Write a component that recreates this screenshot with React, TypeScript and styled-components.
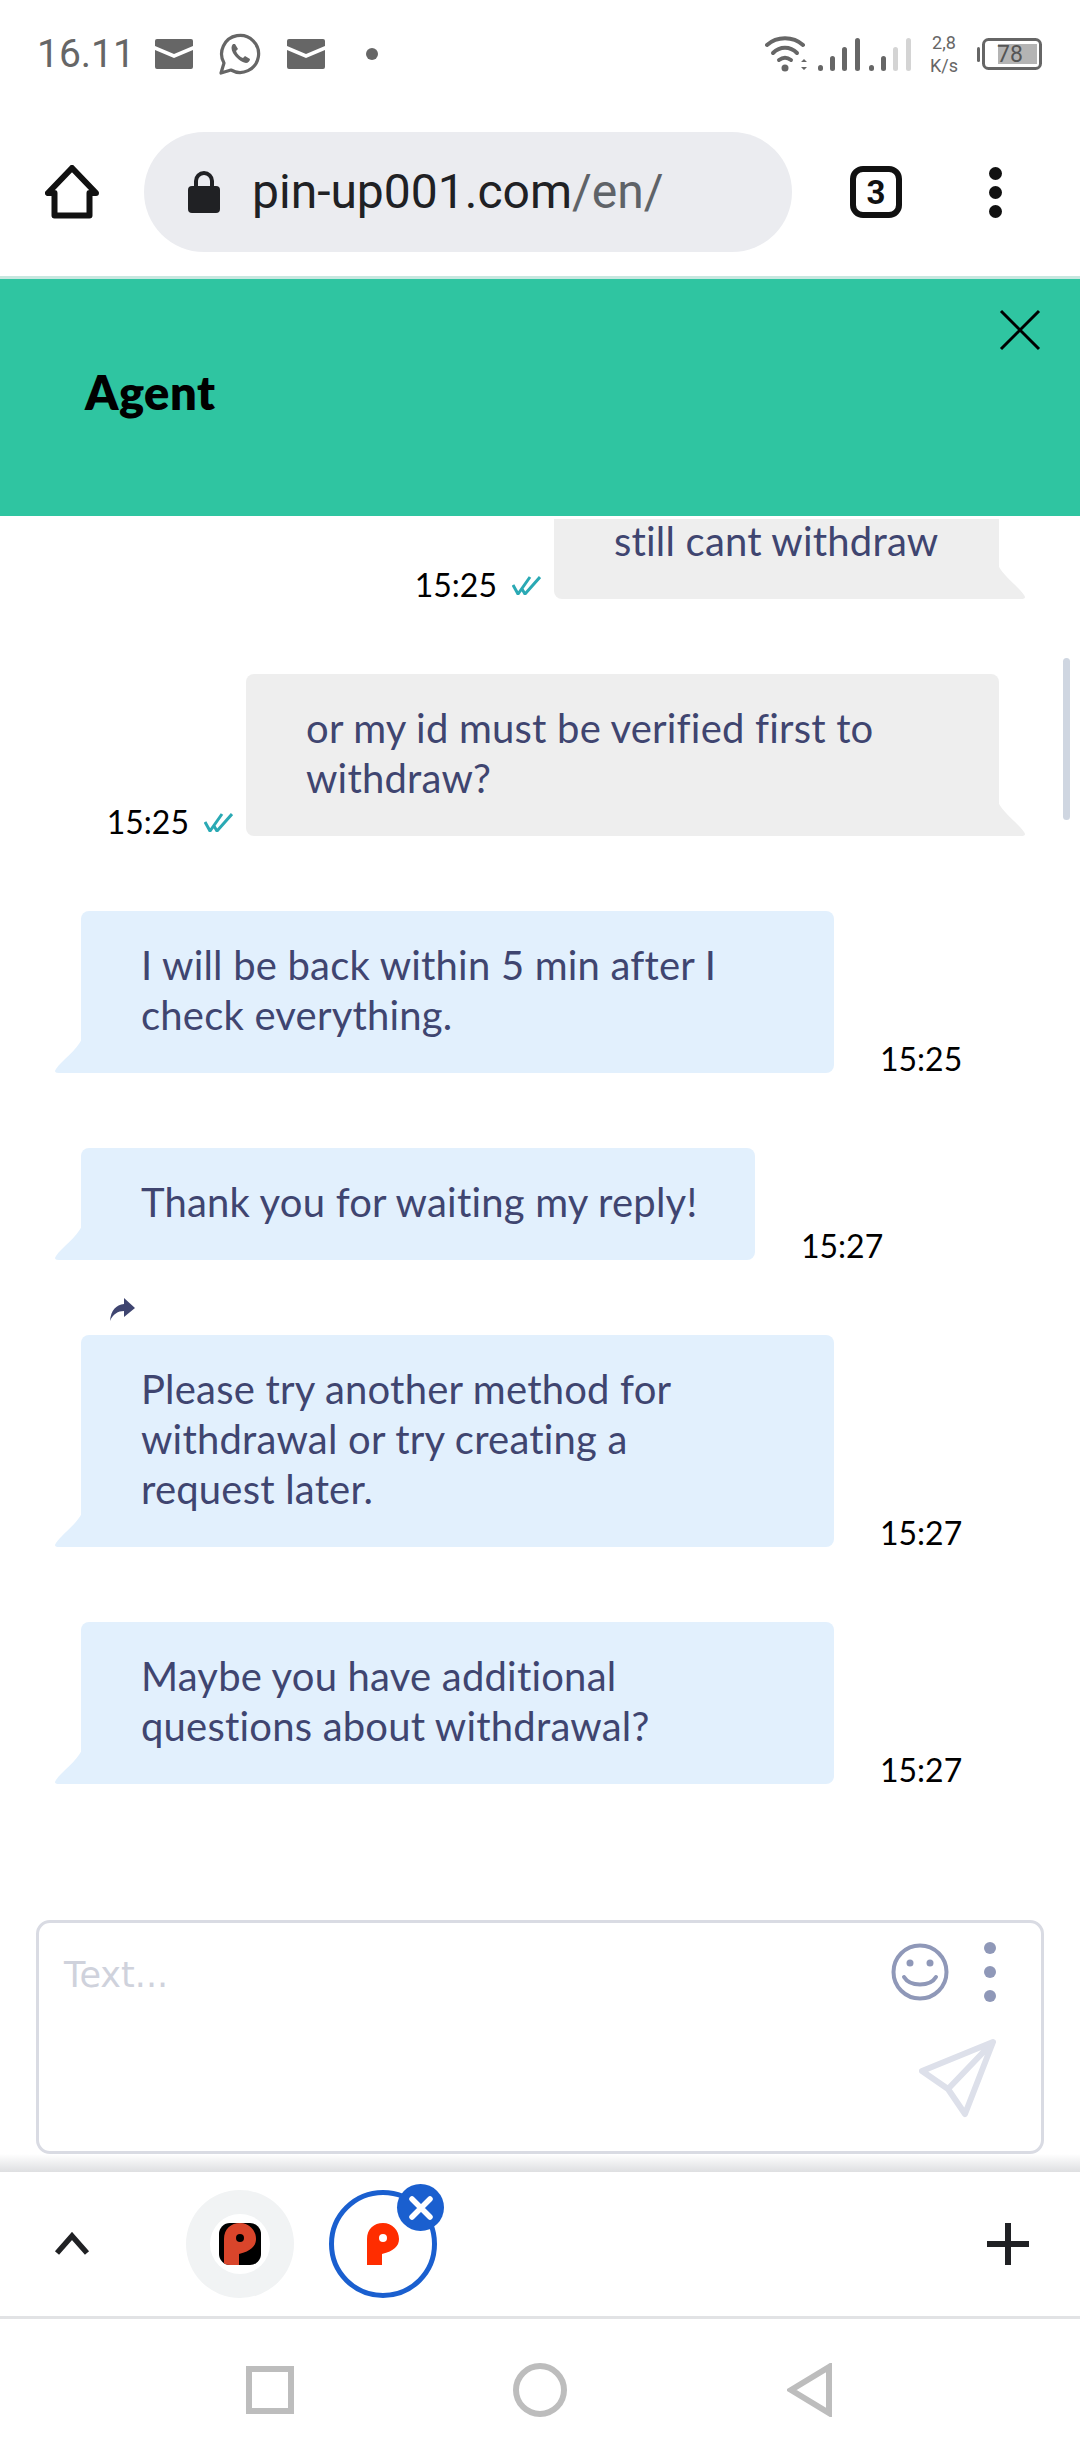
import React from 'react';
import styled, {createGlobalStyle} from 'styled-components';

const GlobalStyle = createGlobalStyle`
  html, body {
    margin: 0;
    padding: 0;
    background: #fff;
  }
  * {
    box-sizing: border-box;
  }
`;

const chatFont = `Lato, "Open Sans", sans-serif`;

const Page = styled.div`
  width: 1080px;
  height: 2460px;
  display: flex;
  flex-direction: column;
  overflow: hidden;
  background: #fff;
`;

const StatusBar = styled.div`
  height: 108px;
  flex: none;
  display: flex;
  align-items: center;
  justify-content: space-between;
  padding: 0 38px 0 37px;
  color: #666;
`;

const StatusGroup = styled.div<{$gap?: number}>`
  display: flex;
  align-items: center;
  gap: ${p => p.$gap ?? 0}px;
`;

const Clock = styled.span`
  font: 400 39px/44px Roboto, sans-serif;
  width: 92px;
`;

const Speed = styled.div`
  width: 46px;
  margin: 0 10px 0 9px;
  text-align: center;
  font: 400 18px/23px Roboto, sans-serif;
  color: #666;
`;

const NoticeDot = styled.svg`
  width: 12px;
  height: 12px;
  margin-left: 15px;
`;

const WifiIcon = styled.svg`
  width: 43px;
  height: 36px;
  margin-right: 10px;
`;

const Toolbar = styled.div`
  height: 168px;
  flex: none;
  display: flex;
  align-items: center;
  padding: 0 45px;
`;

const UrlPill = styled.div`
  width: 648px;
  height: 120px;
  margin-left: 45px;
  border-radius: 60px;
  background: #ebecf0;
  display: flex;
  align-items: center;
  padding-left: 44px;
  gap: 32px;
`;

const UrlText = styled.span`
  font: 400 48px/56px Roboto, sans-serif;
  color: #202124;
`;

const UrlPath = styled.span`
  color: #5f6368;
`;

const TabCount = styled.div`
  width: 52px;
  height: 52px;
  margin-left: 58px;
  border: 6px solid #111;
  border-radius: 13px;
  display: flex;
  align-items: center;
  justify-content: center;
  font: 700 33px/1 Roboto, sans-serif;
  color: #111;
`;

const MenuDots = styled.div`
  margin-left: 87px;
  display: flex;
  flex-direction: column;
  gap: 6px;
`;

const MenuDot = styled.span`
  width: 13px;
  height: 13px;
  border-radius: 50%;
  background: #111;
`;

const ToolbarLine = styled.div`
  height: 3px;
  flex: none;
  background: #c6e7df;
`;

const ChatHeader = styled.div`
  position: relative;
  height: 237px;
  flex: none;
  background: #2fc5a1;
  display: flex;
  align-items: center;
  padding: 0 0 12px 85px;
`;

const AgentName = styled.h1`
  margin: 0;
  font: 800 47px/50px ${chatFont};
  letter-spacing: 0.5px;
  color: #000;
`;

const CloseButton = styled.button`
  position: absolute;
  top: 30px;
  right: 39px;
  width: 42px;
  height: 42px;
  padding: 0;
  border: 0;
  background: none;
  display: flex;
`;

const Messages = styled.div`
  position: relative;
  flex: 1;
  min-height: 0;
  margin-top: 3px;
  overflow: hidden;
  display: flex;
  flex-direction: column;
  justify-content: flex-end;
  gap: 75px;
  padding-bottom: 136px;
`;

const ScrollThumb = styled.div`
  position: absolute;
  top: 139px;
  right: 10px;
  width: 7px;
  height: 162px;
  border-radius: 4px;
  background: #cfd6e1;
`;

const Row = styled.div<{$out?: boolean}>`
  position: relative;
  flex: none;
  display: flex;
  align-items: flex-end;
  justify-content: ${p => (p.$out ? 'flex-end' : 'flex-start')};
  padding: ${p => (p.$out ? '0 81px 0 0' : '0 0 0 81px')};
`;

const Bubble = styled.div<{$out?: boolean; $width: number}>`
  position: relative;
  flex: none;
  width: ${p => p.$width}px;
  padding: 29px 10px 33px 60px;
  border-radius: ${p => (p.$out ? '8px 8px 0 8px' : '8px 8px 8px 0')};
  background: ${p => (p.$out ? '#eeeeee' : '#e2f0fd')};
  color: #3f4570;
  font: 400 40px/50px ${chatFont};
  letter-spacing: 0.2px;

  &::after {
    content: '';
    position: absolute;
    bottom: 0;
    width: 28px;
    height: 34px;
    background: inherit;
    clip-path: path('M0 0 C6 12 20 21 26 30 Q29 34 23 34 L0 34 Z');
    ${p => (p.$out ? 'left: calc(100% - 1px);' : 'right: calc(100% - 1px); transform: scaleX(-1);')}
  }
`;

const Time = styled.span<{$out?: boolean}>`
  flex: none;
  font: 400 32px/28px ${chatFont};
  color: #000;
  margin-left: ${p => (p.$out ? '0' : '46px')};
`;

const ReplyMark = styled.svg`
  position: absolute;
  top: -38px;
  left: 110px;
  width: 25px;
  height: 24px;
`;

const CheckMark = styled.svg`
  flex: none;
  width: 29px;
  height: 19px;
  margin: 0 13px 4px 15px;
`;

const Composer = styled.div`
  position: relative;
  flex: none;
  height: 234px;
  margin: 0 36px;
  padding: 32px 0 0 25px;
  border: 3px solid #d9dbe3;
  border-radius: 14px;
`;

const Placeholder = styled.span`
  font: 400 35px/40px 'DejaVu Sans', sans-serif;
  color: #cfd2dc;
`;

const ComposerTools = styled.div`
  position: absolute;
  top: 19px;
  right: 14px;
  display: flex;
  flex-direction: column;
  align-items: flex-end;
`;

const ToolRow = styled.div`
  display: flex;
  align-items: center;
  gap: 35px;
  padding-right: 31px;
`;

const SendIcon = styled.svg`
  width: 78px;
  height: 80px;
  margin: 36px 30px 0 0;
`;

const TabShade = styled.div`
  height: 18px;
  flex: none;
  background: linear-gradient(#fff, #dedfe1);
`;

const TabStrip = styled.div`
  height: 147px;
  flex: none;
  border-bottom: 3px solid #e2e3e5;
  display: flex;
  align-items: center;
  padding: 0 51px 0 54px;
`;

const ExpandIcon = styled.svg`
  width: 36px;
  height: 24px;
  margin-right: 96px;
`;

const TabBubble = styled.div<{$active?: boolean}>`
  position: relative;
  width: 108px;
  height: 108px;
  margin-right: 35px;
  border-radius: 50%;
  display: flex;
  align-items: center;
  justify-content: center;
  background: ${p => (p.$active ? '#fff' : '#f1f3f4')};
  border: ${p => (p.$active ? '5px solid #1a5fcf' : '0')};
`;

const FaviconWell = styled.div`
  width: 60px;
  height: 60px;
  border-radius: 50%;
  background: #fff;
  display: flex;
  align-items: center;
  justify-content: center;
`;

const BlackTile = styled.div`
  width: 42px;
  height: 42px;
  padding: 0 4px;
  border-radius: 11px;
  background: #000;
  display: flex;
  align-items: center;
  justify-content: center;
  overflow: hidden;
`;

const TabClose = styled.div`
  position: absolute;
  top: -11px;
  right: -12px;
  width: 47px;
  height: 47px;
  border-radius: 50%;
  background: #1a5fcf;
  display: flex;
  align-items: center;
  justify-content: center;
`;

const AddTab = styled.svg`
  width: 42px;
  height: 42px;
  margin-left: auto;
`;

const NavBar = styled.div`
  height: 141px;
  flex: none;
  display: grid;
  grid-template-columns: repeat(3, 270px);
  padding: 0 135px;
  align-items: center;
  justify-items: center;
`;

const PinLogo = ({color, hole, height}: {color: string; hole: string; height: number}) => (
  <svg width={(height * 32) / 42} height={height} viewBox="0 0 32 42">
    <path d="M0 42V16C0 6 7 0 16 0C25 0 32 7 32 16C32 23 27 28 15 31V42Z" fill={color} />
    <circle cx="16" cy="15" r="4" fill={hole} />
  </svg>
);

const Mail = () => (
  <svg width="38" height="30" viewBox="0 0 38 30">
    <path d="M2 0H36A2 2 0 0 1 38 2V7L19 15L0 7V2A2 2 0 0 1 2 0Z" fill="#666" />
    <path d="M0 11L19 19L38 11V28A2 2 0 0 1 36 30H2A2 2 0 0 1 0 28Z" fill="#666" />
  </svg>
);

const Whatsapp = () => (
  <svg width="42" height="42" viewBox="0 0 42 42" fill="none">
    <path d="M2 40L5 30A18.500 18.500 0 1 1 12 37Z" stroke="#666" strokeWidth="3.2" strokeLinejoin="round" />
    <path
      d="M14 11C12 13 12 16 14 20C17 25 22 29 27 30C29 30 31 28 31 26L26 23L24 25C21 24 18 21 17 18L19 16L16 11Z"
      fill="#666"
    />
  </svg>
);

const WifiSignal = () => (
  <WifiIcon viewBox="0 0 43 36" fill="none">
    <g stroke="#666" strokeWidth="4" strokeLinecap="round">
      <path d="M2 9C12 0 28 0 38 9" />
      <path d="M8 17C15 10 25 10 32 17" />
      <path d="M14 24C18 21 22 21 26 24" />
    </g>
    <circle cx="20" cy="32" r="3.500" fill="#666" />
    <path d="M36 26L39 23L42 26ZM36 31L39 34L42 31Z" fill="#666" />
  </WifiIcon>
);

const bars = [
  {x: 0, h: 6, c: '#666'},
  {x: 12, h: 15, c: '#666'},
  {x: 24, h: 24, c: '#666'},
  {x: 37, h: 33, c: '#666'},
  {x: 51, h: 6, c: '#666'},
  {x: 63, h: 15, c: '#666'},
  {x: 75, h: 24, c: '#d4d4d4'},
  {x: 88, h: 33, c: '#d4d4d4'},
];

const Signal = () => (
  <svg width="94" height="36" viewBox="0 0 94 36">
    {bars.map(b => (
      <rect key={b.x} x={b.x} y={35 - b.h} width="5" height={b.h} rx="2.500" fill={b.c} />
    ))}
  </svg>
);

const Battery = () => (
  <svg width="65" height="32" viewBox="0 0 65 32">
    <rect x="0" y="9" width="3" height="15" rx="1.500" fill="#666" />
    <rect x="6.500" y="1.500" width="57" height="29" rx="5" fill="none" stroke="#666" strokeWidth="3" />
    <rect x="21" y="6" width="39" height="20" fill="#b4b4b4" />
    <text x="33" y="24" textAnchor="middle" fontFamily="Roboto, sans-serif" fontSize="23" fill="#555">
      78
    </text>
  </svg>
);

const messages = [
  {out: true, time: '15:25', width: 445, lines: ['still cant withdraw']},
  {out: true, time: '15:25', width: 753, lines: ['or my id must be verified first to', 'withdraw?']},
  {time: '15:25', width: 753, lines: ['I will be back within 5 min after I', 'check everything.']},
  {time: '15:27', width: 674, lines: ['Thank you for waiting my reply!']},
  {time: '15:27', width: 753, reply: true, lines: ['Please try another method for', 'withdrawal or try creating a', 'request later.']},
  {time: '15:27', width: 753, lines: ['Maybe you have additional', 'questions about withdrawal?']},
];

const App = () => (
  <Page>
    <GlobalStyle />
    <StatusBar>
      <StatusGroup $gap={26}>
        <Clock>16.11</Clock>
        <Mail />
        <Whatsapp />
        <Mail />
        <NoticeDot viewBox="0 0 12 12">
          <circle cx="6" cy="6" r="6" fill="#666" />
        </NoticeDot>
      </StatusGroup>
      <StatusGroup>
        <WifiSignal />
        <Signal />
        <Speed>
          2,8
          <br />
          K/s
        </Speed>
        <Battery />
      </StatusGroup>
    </StatusBar>

    <Toolbar>
      <svg width="54" height="54" viewBox="0 0 54 54" fill="none">
        <path d="M27 3L3 28H9.500V50.500H44.500V28H51Z" stroke="#111" strokeWidth="6" strokeLinejoin="round" />
      </svg>
      <UrlPill>
        <svg width="32" height="42" viewBox="0 0 32 42" fill="none">
          <path d="M8 18V10A8 8 0 0 1 24 10V18" stroke="#202124" strokeWidth="4" />
          <rect x="0" y="15" width="32" height="27" rx="4" fill="#202124" />
        </svg>
        <UrlText>
          pin-up001.com<UrlPath>/en/</UrlPath>
        </UrlText>
      </UrlPill>
      <TabCount>3</TabCount>
      <MenuDots>
        <MenuDot />
        <MenuDot />
        <MenuDot />
      </MenuDots>
    </Toolbar>
    <ToolbarLine />

    <ChatHeader>
      <AgentName>Agent</AgentName>
      <CloseButton>
        <svg width="42" height="42" viewBox="0 0 42 42">
          <path d="M2 2L40 40M40 2L2 40" stroke="#000" strokeWidth="3" />
        </svg>
      </CloseButton>
    </ChatHeader>

    <Messages>
      {messages.map((m, i) => (
        <Row key={i} $out={m.out}>
          {m.reply && (
            <ReplyMark viewBox="0 0 25 24">
              <path d="M14 1L25 11L14 20V14C8 14 3 17 0 24C1 13 6 8 14 7Z" fill="#3f4570" />
            </ReplyMark>
          )}
          {m.out && <Time $out>{m.time}</Time>}
          {m.out && (
            <CheckMark viewBox="0 0 29 19" fill="none">
              <path d="M1 9L6 18L18 1M10 13L13 18L28 1" stroke="#2aa9b4" strokeWidth="3" />
            </CheckMark>
          )}
          <Bubble $out={m.out} $width={m.width}>
            {m.lines.map((line, j) => (
              <div key={j}>{line}</div>
            ))}
          </Bubble>
          {!m.out && <Time>{m.time}</Time>}
        </Row>
      ))}
      <ScrollThumb />
    </Messages>

    <Composer>
      <Placeholder>Text...</Placeholder>
      <ComposerTools>
        <ToolRow>
          <svg width="58" height="58" viewBox="0 0 58 58" fill="none">
            <circle cx="29" cy="29" r="26.500" stroke="#8f98b8" strokeWidth="4" />
            <circle cx="19" cy="20" r="3.500" fill="#8f98b8" />
            <circle cx="39" cy="20" r="3.500" fill="#8f98b8" />
            <path d="M13 34C19 44 39 44 45 34" stroke="#8f98b8" strokeWidth="4" strokeLinecap="round" />
          </svg>
          <svg width="12" height="60" viewBox="0 0 12 60">
            <circle cx="6" cy="6" r="6" fill="#8f98b8" />
            <circle cx="6" cy="30" r="6" fill="#8f98b8" />
            <circle cx="6" cy="54" r="6" fill="#8f98b8" />
          </svg>
        </ToolRow>
        <SendIcon viewBox="0 0 78 80" fill="none">
          <path
            d="M74 4L3 33L29 51L46 76ZM29 51L74 4"
            stroke="#dde0ea"
            strokeWidth="6"
            strokeLinejoin="round"
          />
        </SendIcon>
      </ComposerTools>
    </Composer>

    <TabShade />
    <TabStrip>
      <ExpandIcon viewBox="0 0 36 24" fill="none">
        <path d="M3 21L18 4L33 21" stroke="#202124" strokeWidth="5.500" />
      </ExpandIcon>
      <TabBubble>
        <FaviconWell>
          <BlackTile>
            <PinLogo color="#d9452b" hole="#000" height={42} />
          </BlackTile>
        </FaviconWell>
      </TabBubble>
      <TabBubble $active>
        <PinLogo color="#ff2d00" hole="#fff" height={42} />
        <TabClose>
          <svg width="24" height="24" viewBox="0 0 24 24">
            <path d="M3 3L21 21M21 3L3 21" stroke="#fff" strokeWidth="5.500" strokeLinecap="round" />
          </svg>
        </TabClose>
      </TabBubble>
      <AddTab viewBox="0 0 42 42">
        <path d="M21 0V42M0 21H42" stroke="#202124" strokeWidth="6" />
      </AddTab>
    </TabStrip>

    <NavBar>
      <svg width="48" height="48" viewBox="0 0 48 48" fill="none">
        <rect x="3" y="3" width="42" height="42" stroke="#bdbdbd" strokeWidth="6" />
      </svg>
      <svg width="54" height="54" viewBox="0 0 54 54" fill="none">
        <circle cx="27" cy="27" r="24" stroke="#bdbdbd" strokeWidth="6" />
      </svg>
      <svg width="46" height="54" viewBox="0 0 46 54" fill="none">
        <path d="M42 4L4 27L42 50Z" stroke="#bdbdbd" strokeWidth="6" />
      </svg>
    </NavBar>
  </Page>
);

export default App;
